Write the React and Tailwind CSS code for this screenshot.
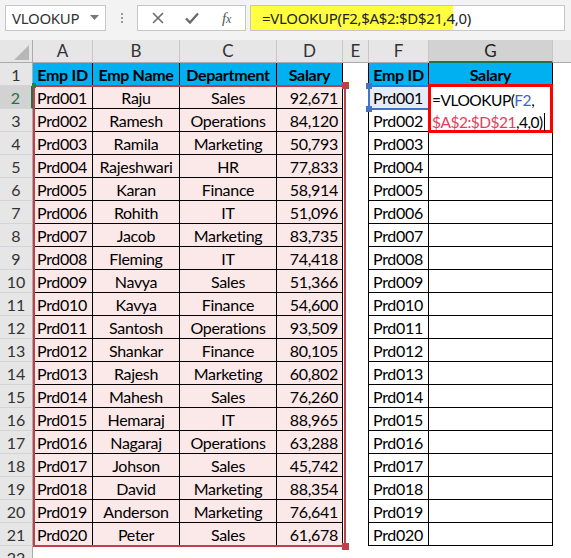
import React from 'react';

const data = [
  ['Prd001', 'Raju', 'Sales', '92,671'],
  ['Prd002', 'Ramesh', 'Operations', '84,120'],
  ['Prd003', 'Ramila', 'Marketing', '50,793'],
  ['Prd004', 'Rajeshwari', 'HR', '77,833'],
  ['Prd005', 'Karan', 'Finance', '58,914'],
  ['Prd006', 'Rohith', 'IT', '51,096'],
  ['Prd007', 'Jacob', 'Marketing', '83,735'],
  ['Prd008', 'Fleming', 'IT', '74,418'],
  ['Prd009', 'Navya', 'Sales', '51,366'],
  ['Prd010', 'Kavya', 'Finance', '54,600'],
  ['Prd011', 'Santosh', 'Operations', '93,509'],
  ['Prd012', 'Shankar', 'Finance', '80,105'],
  ['Prd013', 'Rajesh', 'Marketing', '60,802'],
  ['Prd014', 'Mahesh', 'Sales', '76,260'],
  ['Prd015', 'Hemaraj', 'IT', '88,965'],
  ['Prd016', 'Nagaraj', 'Operations', '63,288'],
  ['Prd017', 'Johson', 'Sales', '45,742'],
  ['Prd018', 'David', 'Marketing', '88,354'],
  ['Prd019', 'Anderson', 'Marketing', '76,641'],
  ['Prd020', 'Peter', 'Sales', '61,678'],
];

const letters = ['A', 'B', 'C', 'D', 'E', 'F', 'G'];

// excel puts text at the bottom of the cell
const cell = 'h-[23px] flex items-end pb-[1px] leading-[19px] overflow-hidden whitespace-nowrap';
const tbl = 'border-r border-b border-black';

function RowHead({ n, active }) {
  return (
    <div
      className={
        cell +
        ' justify-center tracking-normal border-b border-[#d4d4d4] ' +
        (active
          ? 'bg-[#d2d2d2] text-[#217346] border-r-2 border-r-[#217346]'
          : 'bg-[#e6e6e6] text-[#333] border-r border-r-[#ababab]')
      }
    >
      {n}
    </div>
  );
}

function FormulaBar() {
  return (
    <div className="h-10 bg-[#f3f3f3] flex items-start pt-[5px] pl-[5px] font-['Noto_Sans',sans-serif] text-[15px] text-[#333]">
      <div className="w-[101px] h-[26px] bg-white border border-[#c6c6c6] flex items-center justify-between pl-[6px] pr-[6px]">
        <span>VLOOKUP</span>
        <svg width="9" height="6" viewBox="0 0 9 6">
          <path d="M0 0 L9 0 L4.5 5 Z" fill="#777" />
        </svg>
      </div>
      <div className="w-[31px] h-[26px] flex flex-col items-center justify-center gap-[2px]">
        <span className="w-[2px] h-[2px] bg-[#9a9a9a]" />
        <span className="w-[2px] h-[2px] bg-[#9a9a9a]" />
        <span className="w-[2px] h-[2px] bg-[#9a9a9a]" />
      </div>
      <div className="w-[109px] h-[26px] bg-white border border-[#c6c6c6] flex items-center">
        <svg className="ml-[14px]" width="12" height="12" viewBox="0 0 12 12">
          <path d="M1 1 L11 11 M11 1 L1 11" stroke="#6b6b6b" strokeWidth="1.6" />
        </svg>
        <svg className="ml-[21px]" width="14" height="12" viewBox="0 0 14 12">
          <path d="M1 6.5 L5 10.5 L13 1.5" stroke="#6b6b6b" strokeWidth="2.4" fill="none" />
        </svg>
        <span className="ml-[23px] italic font-['Liberation_Serif',serif] text-[15px] text-[#555]">
          f<span className="text-[12px]">x</span>
        </span>
      </div>
      <div className="ml-[4px] w-[315px] h-[26px] bg-white border border-[#c6c6c6] flex items-stretch">
        <div className="w-[202px] bg-[#ffff40] flex items-center pl-[11px] text-[15px] text-[#222]">
          =VLOOKUP(F2,$A$2:$D$21,4,0)
        </div>
      </div>
    </div>
  );
}

export default function App() {
  return (
    <div className="w-[571px] h-[558px] overflow-hidden bg-white font-['Lato',sans-serif] text-[16px] tracking-[-0.3px] text-black">
      <FormulaBar />
      <div className="relative grid grid-cols-[33px_60px_87px_97px_66px_26px_60px_124px_1fr]">
        {/* column headers */}
        <div className="h-[23px] bg-[#e6e6e6] border-r border-b border-[#ababab] flex items-end justify-end pr-[3px] pb-[2px]">
          <svg width="15" height="15" viewBox="0 0 15 15">
            <path d="M15 0 L15 15 L0 15 Z" fill="#b7b7b7" />
          </svg>
        </div>
        {letters.map((l) => (
          <div
            key={l}
            className={
              'h-[23px] flex items-center justify-center text-[17px] tracking-normal ' +
              (l === 'G'
                ? 'bg-[#d2d2d2] border-r border-[#c6c6c6] border-b-2 border-b-[#217346] text-[#222]'
                : 'bg-[#e6e6e6] border-r border-[#c6c6c6] border-b border-b-[#ababab] text-[#333]')
            }
          >
            {l}
          </div>
        ))}
        <div className="h-[23px] bg-[#e6e6e6] border-b border-[#ababab]" />

        {/* row 1 */}
        <RowHead n={1} />
        {['Emp ID', 'Emp Name', 'Department', 'Salary'].map((h) => (
          <div key={h} className={cell + ' justify-center font-bold bg-[#00b0f0] ' + tbl}>
            {h}
          </div>
        ))}
        <div className={cell + ' border-r border-black'} />
        <div className={cell + ' justify-center font-bold bg-[#00b0f0] ' + tbl}>Emp ID</div>
        <div className={cell + ' justify-center font-bold bg-[#00b0f0] ' + tbl}>Salary</div>
        <div className={cell} />

        {data.map((r, i) => (
          <React.Fragment key={r[0]}>
            <RowHead n={i + 2} active={i === 0} />
            <div className={cell + ' pl-[4px] bg-[#fbe8e8] ' + tbl}>{r[0]}</div>
            <div className={cell + ' justify-center bg-[#fbe8e8] ' + tbl}>{r[1]}</div>
            <div className={cell + ' justify-center bg-[#fbe8e8] ' + tbl}>{r[2]}</div>
            <div className={cell + ' justify-end pr-[4px] bg-[#fbe8e8] ' + tbl}>{r[3]}</div>
            <div className={cell + ' border-r border-black'} />
            <div className={cell + ' pl-[4px] ' + (i === 0 ? 'bg-[#e6ecf6] ' : '') + tbl}>{r[0]}</div>
            <div className={cell + ' ' + tbl} />
            <div className={cell} />
          </React.Fragment>
        ))}

        <RowHead n={22} />
        {letters.map((l) => (
          <div key={l} className={cell} />
        ))}
        <div className={cell} />

        {/* copy marquee around A2:D21 */}
        <div className="absolute left-[33px] top-[45px] w-[313px] h-[462px] border-2 border-[#c0404a] pointer-events-none">
          <span className="absolute -right-[5px] -top-[5px] w-[7px] h-[7px] bg-[#c0404a]" />
          <span className="absolute -right-[5px] -bottom-[5px] w-[7px] h-[7px] bg-[#c0404a]" />
          <span className="absolute -left-[3px] -top-[4px] w-[4px] h-[5px] bg-[#2e7d4f]" />
        </div>

        {/* F2 range highlight */}
        <div className="absolute left-[368px] top-[45px] w-[62px] h-[25px] border-2 border-[#4472c4] pointer-events-none">
          <span className="absolute -left-[4px] -top-[4px] w-[6px] h-[6px] bg-[#4472c4]" />
          <span className="absolute -left-[4px] -bottom-[4px] w-[6px] h-[6px] bg-[#4472c4]" />
        </div>

        {/* in-cell editor on G2 */}
        <div className="absolute left-[428px] top-[44px] w-[125px] h-[49px] border-[3px] border-[#ff0000] bg-white pl-[1px] pt-[2px] text-[15.5px] tracking-[-0.5px] leading-[22px] whitespace-nowrap">
          <div>
            =VLOOKUP(<span className="text-[#3a67c0]">F2</span>,
          </div>
          <div className="flex items-center">
            <span className="text-[#e0405a]">$A$2:$D$21</span>,4,0)
            <span className="inline-block w-px h-[18px] bg-black ml-px" />
          </div>
        </div>
      </div>
    </div>
  );
}
